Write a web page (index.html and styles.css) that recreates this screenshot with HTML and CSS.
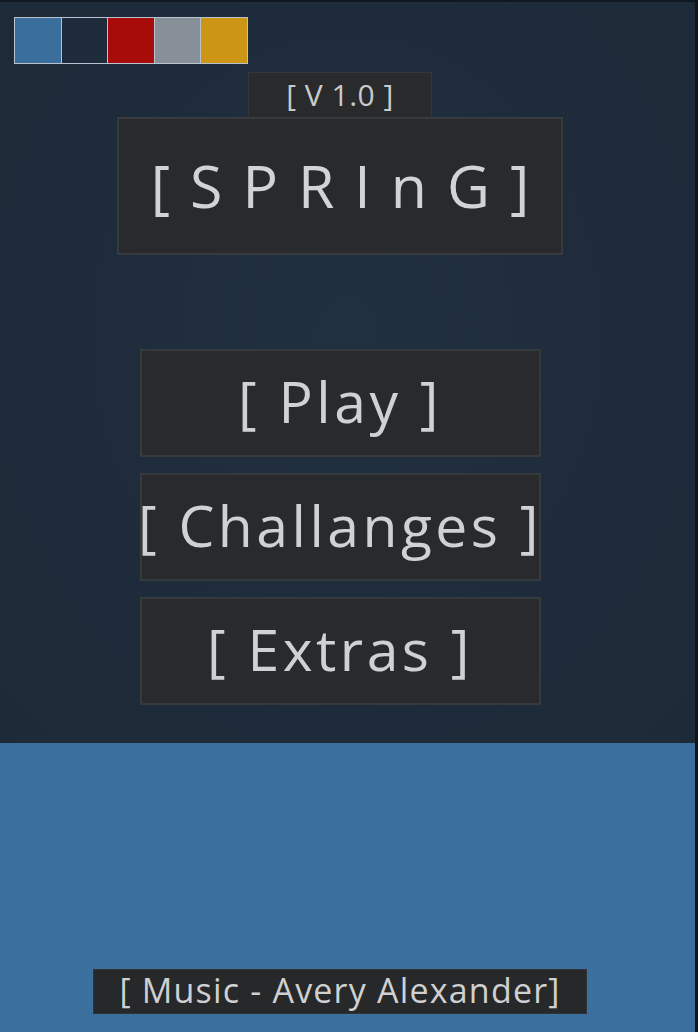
FILE: index.html
```html
<!DOCTYPE html>
<html>
<head>
<meta charset="utf-8">
<link rel="stylesheet" href="styles.css">
</head>
<body>
<div class="page">
  <div class="frame">
    <section class="top">
      <div class="palette">
        <span class="sw sw-blue"></span>
        <span class="sw sw-navy"></span>
        <span class="sw sw-red"></span>
        <span class="sw sw-grey"></span>
        <span class="sw sw-gold"></span>
      </div>
      <div class="column">
        <div class="version">[ V 1.0 ]</div>
        <div class="title">[SPRInG]</div>
        <div class="menu">
          <div class="btn">[ Play ]</div>
          <div class="btn">[ Challanges ]</div>
          <div class="btn">[ Extras ]</div>
        </div>
      </div>
    </section>
    <section class="bottom">
      <div class="credit">[ Music - Avery Alexander]</div>
    </section>
  </div>
  <div class="edge"></div>
</div>
</body>
</html>
```

FILE: styles.css
```css
html, body {
  margin: 0;
  padding: 0;
  background: #0f1822;
}
.page {
  display: flex;
  width: 698px;
  height: 1032px;
  overflow: hidden;
}
.frame {
  width: 695px;
  display: flex;
  flex-direction: column;
  border-top: 2px solid #0f1720;
  box-sizing: border-box;
}
.edge {
  width: 3px;
  background: #0e1620;
}
.top {
  height: 741px;
  background: radial-gradient(ellipse at 50% 45%, #21303f 0%, #1e2b3a 60%, #1d2a38 100%);
  display: flex;
  flex-direction: column;
  padding-right: 15px;
}
.palette {
  display: flex;
  margin: 15px 0 0 14px;
  width: 234px;
  height: 47px;
}
.sw {
  flex: 1;
  border: 1px solid #b9c3cf;
}
.sw + .sw { border-left: none; }
.sw-blue { background: #3a6e9c; }
.sw-navy { background: #1e2b3a; }
.sw-red { background: #a70b0a; }
.sw-grey { background: #878f98; }
.sw-gold { background: #cc9614; }

.column {
  display: flex;
  flex-direction: column;
  align-items: center;
}
.version {
  margin-top: 8px;
  width: 184px;
  height: 45px;
  box-sizing: border-box;
  background: #282a2c;
  border: 1px solid #33373b;
  border-bottom: none;
  color: #c9cacb;
  font-family: "Open Sans", "Noto Sans", sans-serif;
  font-size: 30px;
  line-height: 43px;
  letter-spacing: 0.5px;
  text-align: center;
}
.title {
  width: 446px;
  height: 138px;
  box-sizing: border-box;
  background: #282a2c;
  border: 2px solid #373b3f;
  color: #d2d3d4;
  font-family: "Open Sans", "Noto Sans", sans-serif;
  font-size: 59px;
  line-height: 132px;
  text-align: center;
  letter-spacing: 20px;
  padding-left: 20px;
  white-space: nowrap;
}
.menu {
  margin-top: 94px;
  display: flex;
  flex-direction: column;
  gap: 16px;
}
.btn {
  width: 401px;
  height: 108px;
  box-sizing: border-box;
  background: #282a2c;
  border: 2px solid #363a3e;
  color: #d0d1d2;
  font-family: "Open Sans", "Noto Sans", sans-serif;
  font-size: 57px;
  line-height: 100px;
  letter-spacing: 3.5px;
  text-align: center;
  white-space: nowrap;
  display: flex;
  justify-content: center;
}
.bottom {
  flex: 1;
  background: #3a6f9e;
  display: flex;
  flex-direction: column;
  justify-content: flex-end;
  align-items: center;
  padding-right: 15px;
  padding-bottom: 18px;
}
.credit {
  width: 494px;
  height: 45px;
  box-sizing: border-box;
  background: #262829;
  border: 1px solid #2f3336;
  color: #cfd0d1;
  font-family: "Open Sans", "Noto Sans", sans-serif;
  font-size: 34px;
  line-height: 41px;
  letter-spacing: 1.2px;
  text-align: center;
  white-space: nowrap;
}
```
